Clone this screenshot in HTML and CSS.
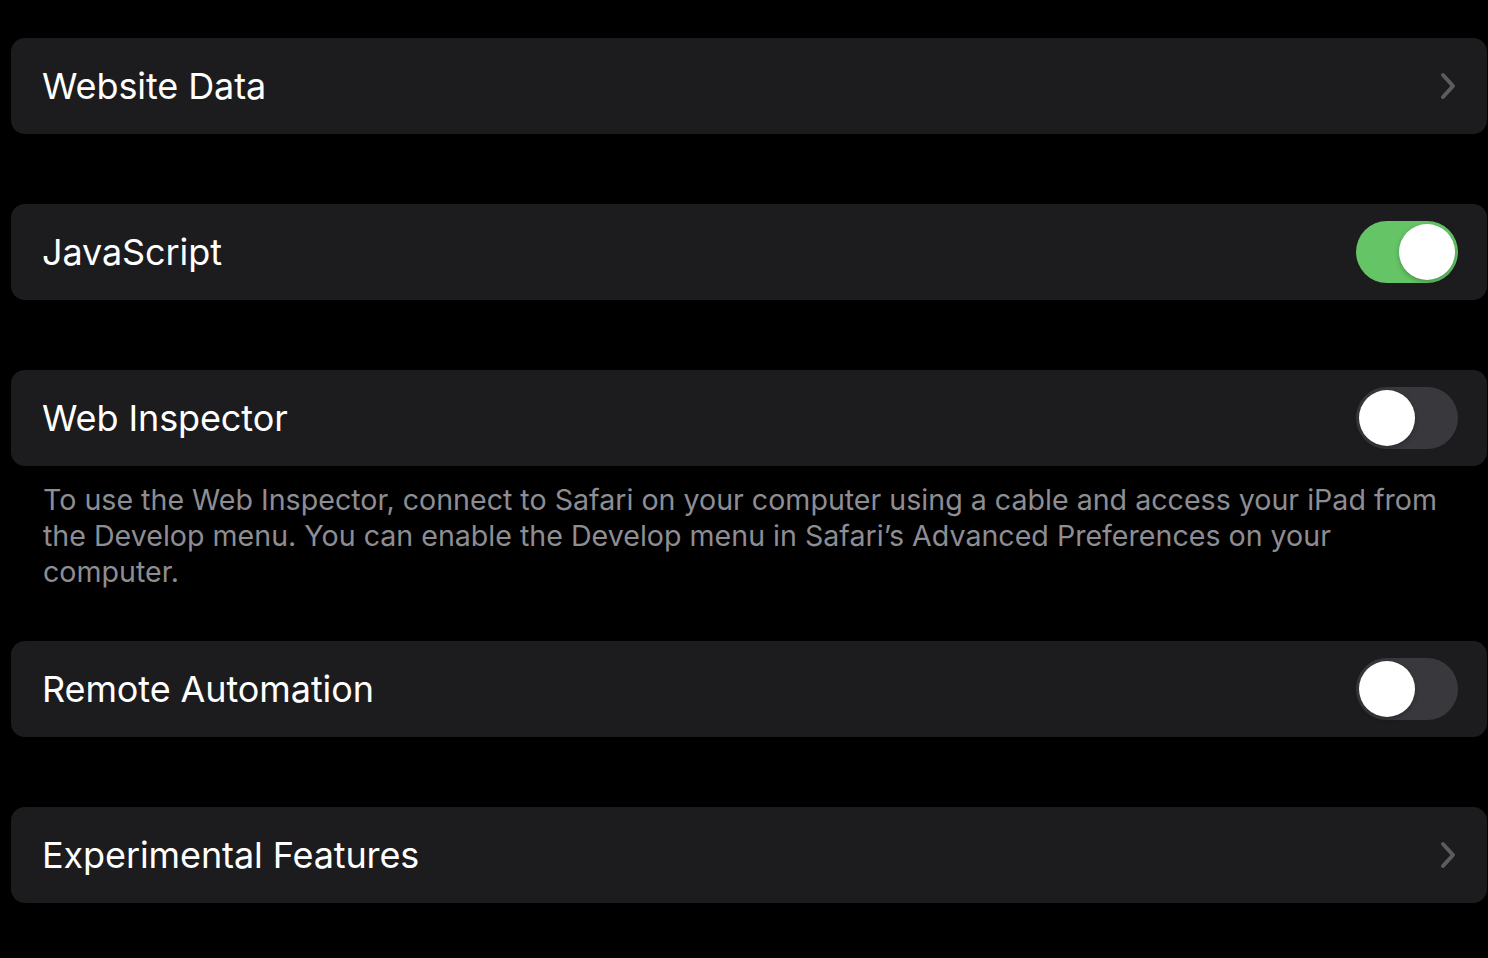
FILE: index.html
```html
<!DOCTYPE html>
<html lang="en">
<head>
    <meta charset="UTF-8">
    <title>Advanced</title>
    <link rel="stylesheet" href="styles.css">
</head>
<body>
    <div class="settings">
        <div class="group">
            <div class="row">
                <span class="label">Website Data</span>
                <svg class="chevron" width="18" height="28" viewBox="0 0 18 28">
                    <polyline points="4,3 14,14 4,25" />
                </svg>
            </div>
        </div>

        <div class="group">
            <div class="row">
                <span class="label">JavaScript</span>
                <span class="toggle on"><span class="knob"></span></span>
            </div>
        </div>

        <div class="group">
            <div class="row">
                <span class="label">Web Inspector</span>
                <span class="toggle"><span class="knob"></span></span>
            </div>
        </div>
        <p class="footer">To use the Web Inspector, connect to Safari on your computer using a cable and access your iPad from the Develop menu. You can enable the Develop menu in Safari’s Advanced Preferences on your computer.</p>

        <div class="group">
            <div class="row">
                <span class="label">Remote Automation</span>
                <span class="toggle"><span class="knob"></span></span>
            </div>
        </div>

        <div class="group">
            <div class="row">
                <span class="label">Experimental Features</span>
                <svg class="chevron" width="18" height="28" viewBox="0 0 18 28">
                    <polyline points="4,3 14,14 4,25" />
                </svg>
            </div>
        </div>
    </div>
</body>
</html>
```

FILE: styles.css
```css
:root {
    --cell: #1c1c1e;
    --label: #ffffff;
    --secondary: #8d8d93;
    --chevron: #5b5b60;
    --green: #65c466;
    --track-off: #39393d;
}

* {
    margin: 0;
    padding: 0;
    box-sizing: border-box;
}

body {
    background-color: #000;
    color: var(--label);
    font-family: Inter, "Noto Sans", sans-serif;
    overflow: hidden;
}

.settings {
    display: flex;
    flex-direction: column;
    gap: 70px;
    padding: 38px 1px 0 11px;
}

.group {
    background-color: var(--cell);
    border-radius: 14px;
}

.row {
    height: 96px;
    display: flex;
    align-items: center;
    justify-content: space-between;
    padding: 0 29px 0 31px;
}

.label {
    font-size: 36px;
    letter-spacing: -0.1px;
}

.chevron {
    margin-right: 1px;
}

.chevron polyline {
    fill: none;
    stroke: var(--chevron);
    stroke-width: 4;
    stroke-linecap: round;
    stroke-linejoin: round;
}

.toggle {
    width: 102px;
    height: 62px;
    border-radius: 31px;
    background-color: var(--track-off);
    display: flex;
    align-items: center;
    padding: 0 3px;
}

.toggle.on {
    background-color: var(--green);
    justify-content: flex-end;
}

.knob {
    width: 56px;
    height: 56px;
    border-radius: 50%;
    background-color: #fff;
    box-shadow: 0 2px 5px rgba(0, 0, 0, 0.25);
}

.footer {
    margin: -54px 0 -19px 0;
    padding: 0 30px 0 32px;
    font-size: 28.6px;
    line-height: 36px;
    color: var(--secondary);
}
```
